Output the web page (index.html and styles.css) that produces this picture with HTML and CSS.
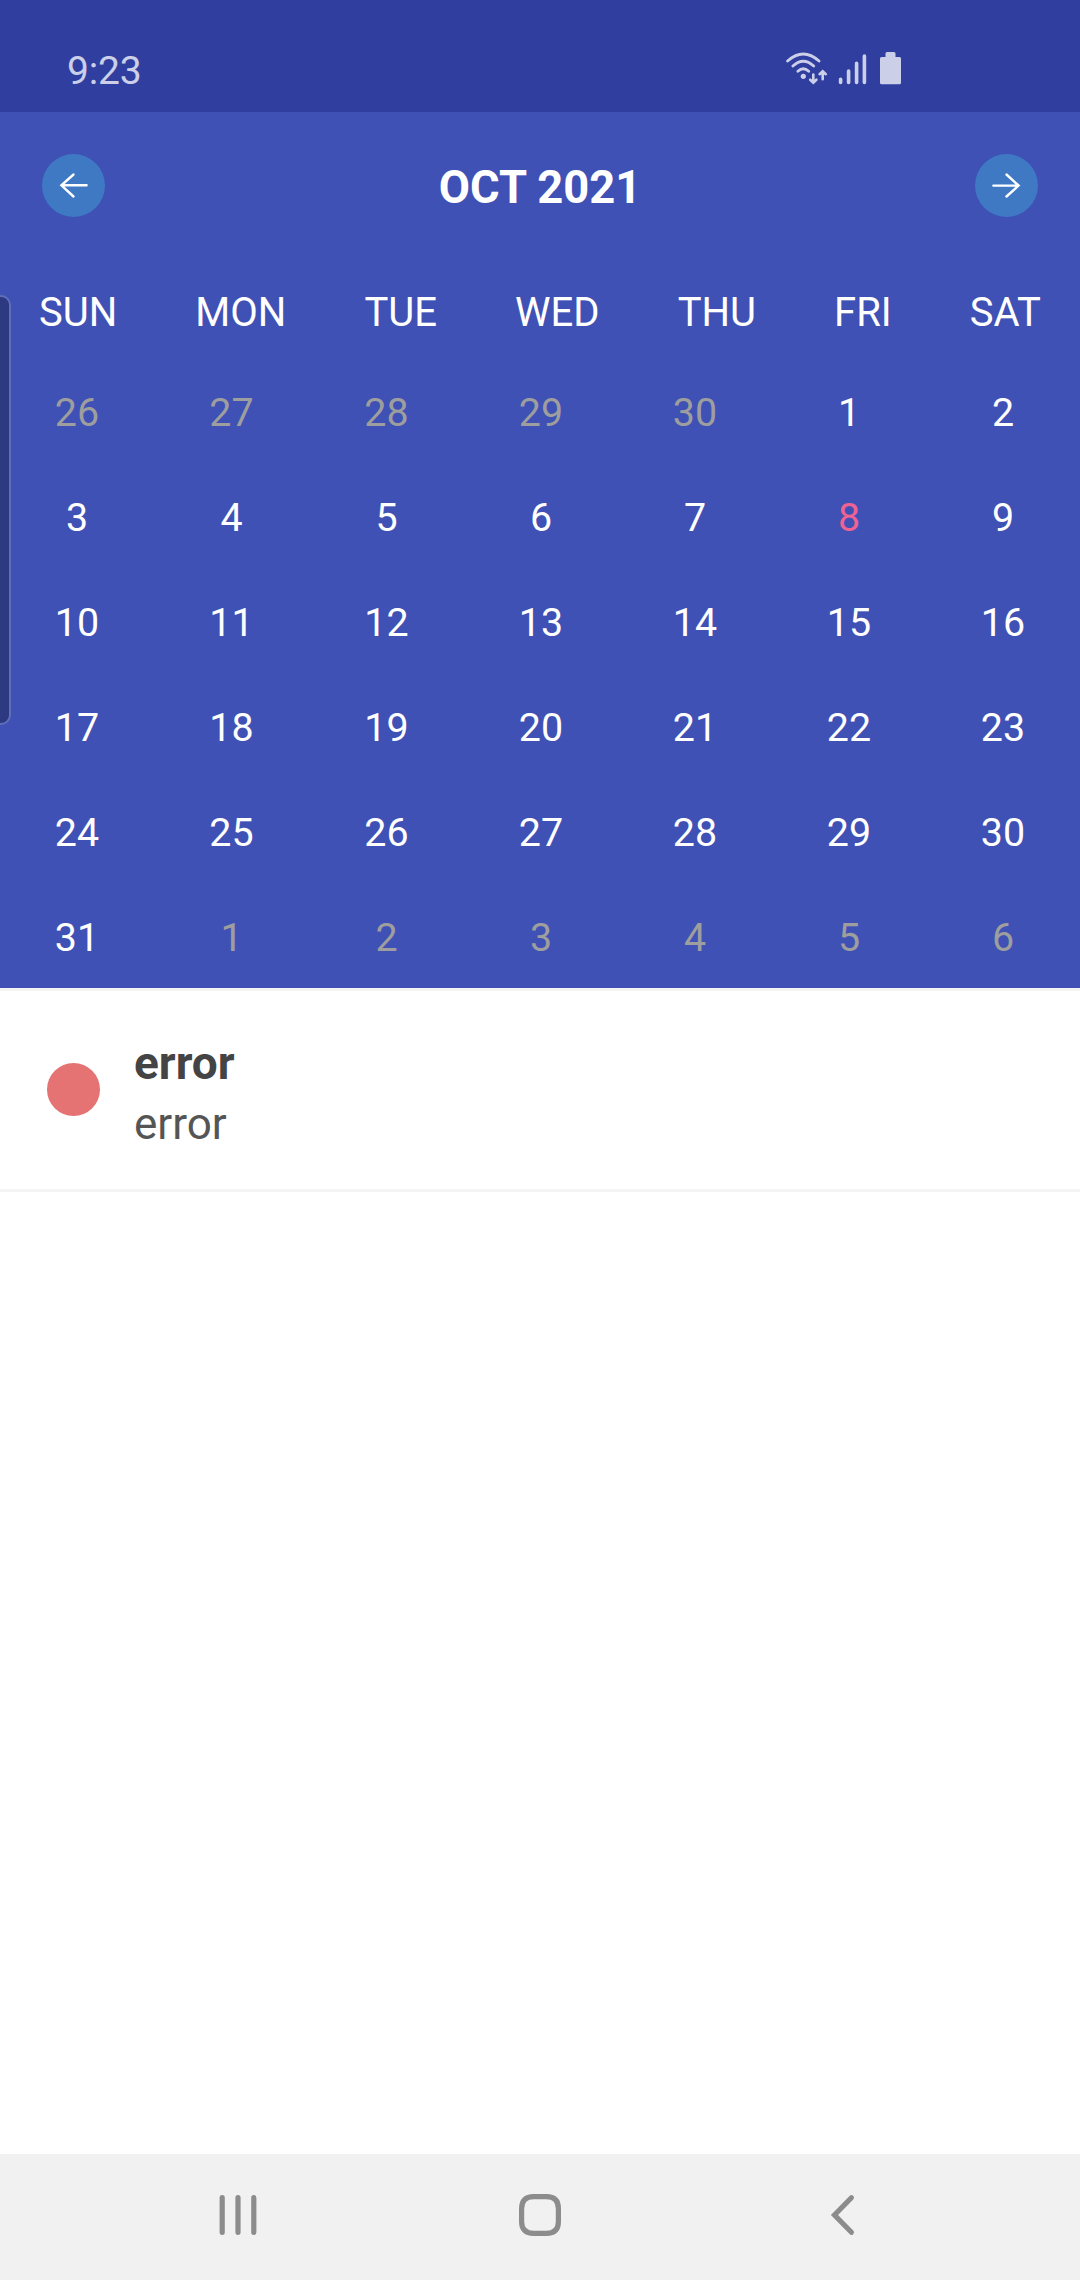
FILE: index.html
```html
<!DOCTYPE html>
<html lang="en">
<head>
<meta charset="utf-8">
<title>Calendar</title>
<link rel="stylesheet" href="styles.css">
</head>
<body>
<div class="screen">
  <header class="status">
    <span class="clock">9:23</span>
    <svg class="status-icons" width="120" height="40" viewBox="0 0 120 40" fill="none" stroke="#cbcfe8">
      <g stroke-width="2.8" stroke-linecap="round">
        <path d="M3.600 9Q19.300 -5 35 9M8.900 14Q19.300 4.500 29.700 14M13.900 19.200Q19.300 14.200 24.700 19.200"/>
        <path stroke-width="2.600" d="M29.300 22.500V30.500M26.200 27.700L29.300 30.700L32.400 27.700M38.700 27.300V19.500M35.600 22.200L38.700 19.200L41.800 22.200"/>
        <circle cx="19.3" cy="24.3" r="2.6" fill="#cbcfe8" stroke="none"/>
        <path stroke-width="3.6" d="M56.600 27.200V30.400M64.600 19V30.400M72.600 11.200V30.400M80.400 4V30.400"/>
      </g>
      <path fill="#cbcfe8" stroke="none" d="M103 0H110Q111.500 0 111.500 1.500V5H115.500Q117 5 117 6.500V30.800Q117 32.300 115.500 32.300H97.500Q96 32.300 96 30.800V6.500Q96 5 97.500 5H101.500V1.500Q101.500 0 103 0Z"/>
    </svg>
  </header>

  <section class="calendar">
    <div class="month-bar">
      <button class="nav-btn" aria-label="Previous month">
        <svg width="63" height="63" viewBox="0 0 63 63"><path d="M44.600 31.300H19.500M31.500 20.500L19.400 31.300L31.500 42.500"/></svg>
      </button>
      <h1 class="month">OCT 2021</h1>
      <button class="nav-btn" aria-label="Next month">
        <svg width="63" height="63" viewBox="0 0 63 63"><path d="M18.400 31.600H43.500M31.500 20.500L43.600 31.600L31.500 42.500"/></svg>
      </button>
    </div>
    <div class="weekdays">
      <span>SUN</span><span>MON</span><span>TUE</span><span>WED</span><span>THU</span><span>FRI</span><span>SAT</span>
    </div>
    <div class="days">
      <span class="out">26</span><span class="out">27</span><span class="out">28</span><span class="out">29</span><span class="out">30</span><span>1</span><span>2</span>
      <span>3</span><span>4</span><span>5</span><span>6</span><span>7</span><span class="today">8</span><span>9</span>
      <span>10</span><span>11</span><span>12</span><span>13</span><span>14</span><span>15</span><span>16</span>
      <span>17</span><span>18</span><span>19</span><span>20</span><span>21</span><span>22</span><span>23</span>
      <span>24</span><span>25</span><span>26</span><span>27</span><span>28</span><span>29</span><span>30</span>
      <span>31</span><span class="out">1</span><span class="out">2</span><span class="out">3</span><span class="out">4</span><span class="out">5</span><span class="out">6</span>
    </div>
  </section>

  <main class="events">
    <article class="event">
      <span class="dot"></span>
      <div class="event-text">
        <h2 class="event-title">error</h2>
        <p class="event-desc">error</p>
      </div>
    </article>
  </main>

  <nav class="navbar">
    <svg width="40" height="42" viewBox="0 0 40 42"><path d="M4.200 3.700V38.300M20 3.700V38.300M35.800 3.700V38.300"/></svg>
    <svg width="42" height="42" viewBox="0 0 42 42"><path d="M14.500 2.600H27.500Q39.400 2.600 39.400 14.500V27.500Q39.400 39.400 27.500 39.400H14.500Q2.600 39.400 2.600 27.500V14.500Q2.600 2.600 14.500 2.600Z"/></svg>
    <svg width="40" height="42" viewBox="0 0 40 42"><path d="M29.400 3.700L12.500 21L29.400 38.300"/></svg>
  </nav>
  <div class="edge-handle"></div>
</div>
</body>
</html>
```
FILE: styles.css
```css
* { box-sizing: border-box; margin: 0; padding: 0; }

body {
  font-family: Roboto, "Liberation Sans", sans-serif;
  background: #fff;
}

.screen {
  position: relative;
  display: flex;
  flex-direction: column;
  width: 1080px;
  height: 2280px;
  overflow: hidden;
}

.status {
  display: flex;
  justify-content: space-between;
  align-items: flex-start;
  height: 112px;
  padding: 48px 176px 0 67px;
  background: #303f9f;
}

.clock {
  color: #cbcfe8;
  font-size: 39px;
  letter-spacing: -0.2px;
  line-height: 46px;
}

.status-icons { display: block; margin-top: 4px; }

.calendar {
  height: 876px;
  background: #3f51b5;
  color: #fff;
  font-size: 39.4px;
}

.month-bar {
  display: flex;
  justify-content: space-between;
  align-items: center;
  height: 147px;
  padding: 0 42px;
}

.month {
  padding-top: 4px;
  font-size: 45.3px;
  font-weight: 700;
}

.nav-btn {
  width: 63px;
  height: 63px;
  border: 0;
  border-radius: 50%;
  background: #3f78c3;
}

.nav-btn svg {
  display: block;
  fill: none;
  stroke: #fff;
  stroke-width: 2.4;
  stroke-linecap: round;
}

.weekdays {
  display: flex;
  justify-content: space-between;
  align-items: center;
  height: 101px;
  padding: 5px 39px 0 39px;
  font-size: 40px;
}

.days {
  display: grid;
  grid-template-columns: 154px 155px 155px repeat(4, 154px);
  grid-auto-rows: 105px;
  align-items: center;
  margin-right: -1px;
  text-align: center;
}

.out { color: #9e9e9e; }
.today { color: #f06292; }

.events { flex: 1; }

.event {
  display: flex;
  align-items: center;
  gap: 34px;
  height: 204px;
  padding-left: 47px;
  border-top: 3px solid #f4f4f4;
  border-bottom: 3px solid #f4f4f4;
}

.dot {
  width: 53px;
  height: 53px;
  margin-bottom: 1px;
  border-radius: 50%;
  background: #e57373;
}

.event-text { padding-top: 8px; }

.event-title {
  color: #444;
  font-size: 46px;
  line-height: 59px;
}

.event-desc {
  color: #555;
  font-size: 44px;
  line-height: 62px;
}

.navbar {
  display: flex;
  justify-content: space-between;
  align-items: flex-start;
  height: 126px;
  padding: 40px 218px 0;
  background: #f1f1f1;
}

.navbar svg {
  fill: none;
  stroke: #8c8c8c;
  stroke-width: 5.2;
  stroke-linecap: round;
}

.edge-handle {
  position: absolute;
  left: -20px;
  top: 295px;
  width: 31px;
  height: 430px;
  border: 2px solid #5f6eb8;
  border-radius: 0 10px 10px 0;
  background: #2d3980;
}
```
